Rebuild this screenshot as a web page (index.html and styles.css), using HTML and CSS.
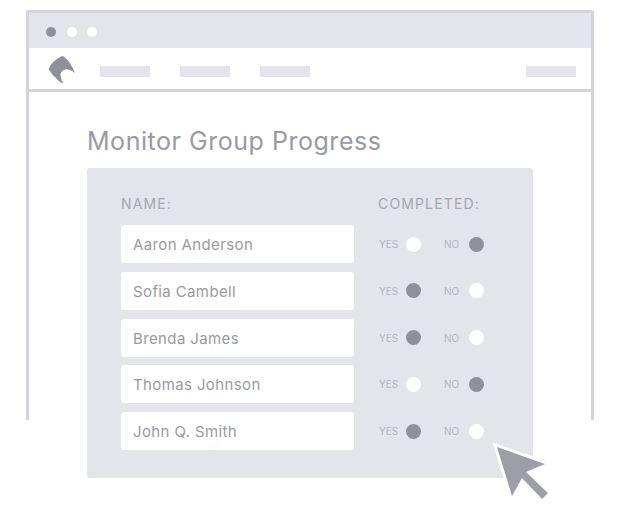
FILE: index.html
```html
<!DOCTYPE html>
<html lang="en">
<head>
<meta charset="utf-8">
<title>Monitor Group Progress</title>
<link rel="stylesheet" href="styles.css">
</head>
<body>
<div class="window">
  <div class="titlebar">
    <span class="dot dot-dark"></span><span class="dot"></span><span class="dot"></span>
  </div>
  <nav class="nav">
    <svg class="logo" width="30" height="30" viewBox="0 0 30 30"><path fill="#8f9098" d="M1.500 15 Q5 7 14 2.500 Q16 1.500 18 3.500 Q24 9 28 19 Q22 14.500 18 15.500 Q13 17 13.500 22 Q14 26 16.500 29 Q13 29 10 25 Q5 21 1.500 15 Z"/></svg>
    <span class="bar"></span><span class="bar"></span><span class="bar"></span>
    <span class="bar bar-end"></span>
  </nav>
  <main class="content">
    <h1 class="title">Monitor Group Progress</h1>
    <section class="panel">
      <div class="head"><span>NAME:</span><span class="head-done">COMPLETED:</span></div>
      <div class="row"><div class="name">Aaron Anderson</div><div class="opts"><span class="opt">YES</span><i class="radio"></i><span class="opt opt-no">NO</span><i class="radio on"></i></div></div>
      <div class="row"><div class="name">Sofia Cambell</div><div class="opts"><span class="opt">YES</span><i class="radio on"></i><span class="opt opt-no">NO</span><i class="radio"></i></div></div>
      <div class="row"><div class="name">Brenda James</div><div class="opts"><span class="opt">YES</span><i class="radio on"></i><span class="opt opt-no">NO</span><i class="radio"></i></div></div>
      <div class="row"><div class="name">Thomas Johnson</div><div class="opts"><span class="opt">YES</span><i class="radio"></i><span class="opt opt-no">NO</span><i class="radio on"></i></div></div>
      <div class="row"><div class="name">John Q. Smith</div><div class="opts"><span class="opt">YES</span><i class="radio on"></i><span class="opt opt-no">NO</span><i class="radio"></i></div></div>
    </section>
  </main>
</div>
<svg class="cursor" width="70" height="70" viewBox="0 0 70 70"><path fill="#9d9ea6" stroke="#fff" stroke-width="6" stroke-miterlimit="10" paint-order="stroke" d="M7 10 L55 27 L36 35 L58 56 L52 62 L32 41 L22 59 Z"/></svg>
</body>
</html>
```
FILE: styles.css
```css
html, body { margin: 0; padding: 0; background: #fff; }
body { width: 618px; height: 523px; overflow: hidden; position: relative; font-family: Inter, "Liberation Sans", sans-serif; }
.window { box-sizing: border-box; width: 568px; height: 410px; margin: 10px 0 0 26px; border: 3px solid #d3d3dc; border-bottom: 0; border-radius: 3px 3px 0 0; }
.titlebar { box-sizing: border-box; height: 35px; background: #e4e5ea; display: flex; align-items: center; gap: 10.5px; padding: 2px 0 0 17px; }
.dot { width: 10px; height: 10px; border-radius: 50%; background: #fff; }
.dot-dark { background: #8f9098; }
.nav { box-sizing: border-box; height: 44px; border-bottom: 3px solid #d3d3dc; display: flex; align-items: center; padding: 0 15px 0 18px; }
.logo { margin-right: 23px; flex: none; }
.bar { width: 50px; height: 11px; background: #e4e5ea; margin: 6px 30px 0 0; }
.bar-end { margin: 6px 0 0 auto; }
.content { padding: 0 58px; }
.title { margin: 0; padding-top: 34px; height: 42px; font-size: 25px; line-height: 30px; font-weight: 400; color: #999aa2; letter-spacing: 0.53px; white-space: nowrap; }
.panel { box-sizing: border-box; width: 446px; height: 310px; padding: 26px 34px 0; background: #e4e5ea; border-radius: 3px; display: flex; flex-direction: column; }
.head { display: flex; height: 31px; font-size: 14px; line-height: 20px; letter-spacing: 1.15px; color: #a6a7af; }
.head span:first-child { width: 257px; }
.row { display: flex; align-items: center; height: 38px; margin-bottom: 8.75px; }
.name { box-sizing: border-box; width: 233px; height: 38px; line-height: 40px; padding-left: 12px; background: #fff; border-radius: 3px; font-size: 15px; letter-spacing: 0.38px; color: #999aa2; }
.opts { display: flex; align-items: center; margin-left: 25px; }
.opt { width: 26px; font-size: 10px; color: #b4b5bd; }
.opt-no { width: 24px; margin-left: 23px; }
.radio { display: block; width: 15px; height: 15px; border-radius: 50%; background: #fff; margin-left: 1px; }
.radio.on { background: #8f9098; }
.cursor { position: absolute; left: 490px; top: 437px; }
```
